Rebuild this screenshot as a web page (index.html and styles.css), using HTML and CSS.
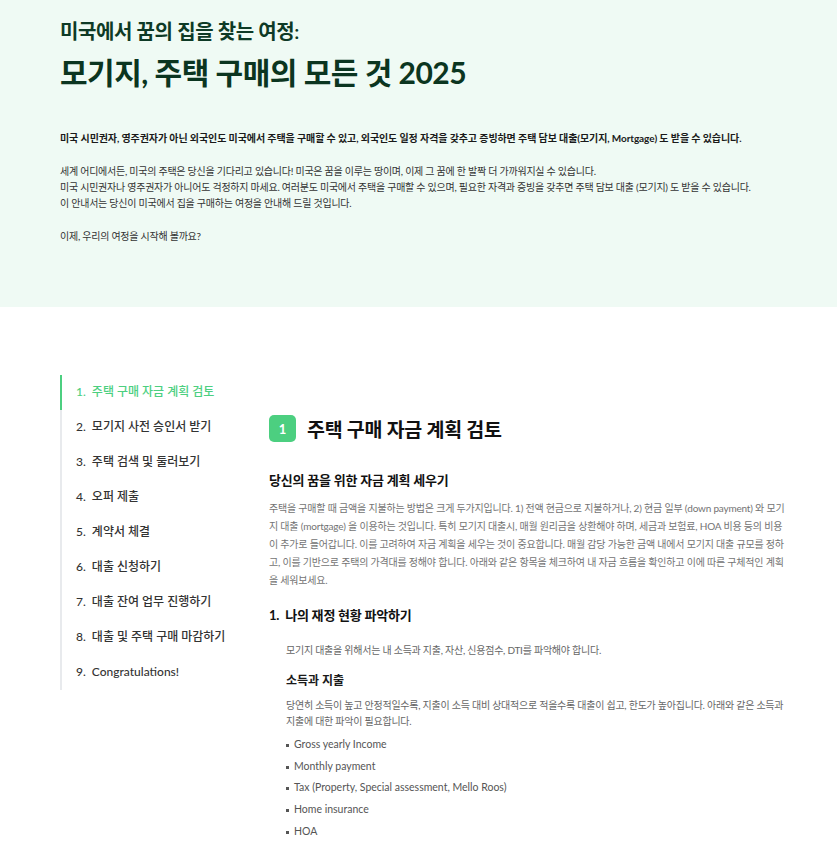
FILE: index.html
```html
<!DOCTYPE html>
<html lang="ko">
<head>
<meta charset="utf-8">
<title>모기지, 주택 구매의 모든 것 2025</title>
<link rel="stylesheet" href="styles.css">
</head>
<body>
<header class="hero">
  <h2 class="hero-sub">미국에서 꿈의 집을 찾는 여정:</h2>
  <h1 class="hero-title">모기지, 주택 구매의 모든 것 2025</h1>
  <p class="hero-lead">미국 시민권자, 영주권자가 아닌 외국인도 미국에서 주택을 구매할 수 있고, 외국인도 일정 자격을 갖추고 증빙하면 주택 담보 대출(모기지, Mortgage) 도 받을 수 있습니다.</p>
  <p class="hero-text">세계 어디에서든, 미국의 주택은 당신을 기다리고 있습니다! 미국은 꿈을 이루는 땅이며, 이제 그 꿈에 한 발짝 더 가까워지실 수 있습니다.<br>미국 시민권자나 영주권자가 아니어도 걱정하지 마세요. 여러분도 미국에서 주택을 구매할 수 있으며, 필요한 자격과 증빙을 갖추면 주택 담보 대출 (모기지) 도 받을 수 있습니다.<br>이 안내서는 당신이 미국에서 집을 구매하는 여정을 안내해 드릴 것입니다.</p>
  <p class="hero-text">이제, 우리의 여정을 시작해 볼까요?</p>
</header>

<div class="layout">
  <nav class="toc">
    <a class="toc-item active">1.&nbsp; 주택 구매 자금 계획 검토</a>
    <a class="toc-item">2.&nbsp; 모기지 사전 승인서 받기</a>
    <a class="toc-item">3.&nbsp; 주택 검색 및 둘러보기</a>
    <a class="toc-item">4.&nbsp; 오퍼 제출</a>
    <a class="toc-item">5.&nbsp; 계약서 체결</a>
    <a class="toc-item">6.&nbsp; 대출 신청하기</a>
    <a class="toc-item">7.&nbsp; 대출 잔여 업무 진행하기</a>
    <a class="toc-item">8.&nbsp; 대출 및 주택 구매 마감하기</a>
    <a class="toc-item">9.&nbsp; Congratulations!</a>
  </nav>

  <main class="content">
    <div class="step-head">
      <span class="step-badge">1</span>
      <h2 class="step-title">주택 구매 자금 계획 검토</h2>
    </div>

    <h3 class="sec-title">당신의 꿈을 위한 자금 계획 세우기</h3>
    <p class="sec-text">주택을 구매할 때 금액을 지불하는 방법은 크게 두가지입니다. 1) 전액 현금으로 지불하거나, 2) 현금 일부 (down payment) 와 모기지 대출 (mortgage) 을 이용하는 것입니다. 특히 모기지 대출시, 매월 원리금을 상환해야 하며, 세금과 보험료, HOA 비용 등의 비용이 추가로 들어갑니다. 이를 고려하여 자금 계획을 세우는 것이 중요합니다. 매월 감당 가능한 금액 내에서 모기지 대출 규모를 정하고, 이를 기반으로 주택의 가격대를 정해야 합니다. 아래와 같은 항목을 체크하여 내 자금 흐름을 확인하고 이에 따른 구체적인 계획을 세워보세요.</p>

    <h3 class="num-title">1.&nbsp; 나의 재정 현황 파악하기</h3>
    <div class="indent">
      <p class="small-text first">모기지 대출을 위해서는 내 소득과 지출, 자산, 신용점수, DTI를 파악해야 합니다.</p>
      <h4 class="sub-title">소득과 지출</h4>
      <p class="small-text after-sub">당연히 소득이 높고 안정적일수록, 지출이 소득 대비 상대적으로 적을수록 대출이 쉽고, 한도가 높아집니다. 아래와 같은 소득과 지출에 대한 파악이 필요합니다.</p>
      <ul class="bullets">
        <li>Gross yearly Income</li>
        <li>Monthly payment</li>
        <li>Tax (Property, Special assessment, Mello Roos)</li>
        <li>Home insurance</li>
        <li>HOA</li>
      </ul>
    </div>
  </main>
</div>
</body>
</html>
```

FILE: styles.css
```css
* { box-sizing: border-box; }

html, body {
  margin: 0;
  padding: 0;
  background: #ffffff;
}

body {
  font-family: "Lato", "Noto Sans CJK KR", "Noto Sans", sans-serif;
  color: #222;
}

.hero {
  background: #effaf4;
  height: 307px;
  padding: 18px 60px 0 60px;
}

.hero-sub {
  margin: 0;
  font-size: 20px;
  line-height: 26px;
  font-weight: 600;
  color: #0e3a26;
  letter-spacing: -0.4px;
}

.hero-title {
  margin: 9px 0 0 0;
  font-size: 30px;
  line-height: 38px;
  font-weight: 700;
  color: #0b3520;
  letter-spacing: -0.5px;
}

.hero-lead {
  margin: 39px 0 0 0;
  font-size: 10px;
  line-height: 16px;
  font-weight: 700;
  color: #1a1a1a;
  letter-spacing: -0.1px;
  white-space: nowrap;
}

.hero-text {
  margin: 17px 0 0 0;
  font-size: 10px;
  line-height: 16px;
  color: #333;
  letter-spacing: -0.25px;
}

.layout {
  display: grid;
  grid-template-columns: 209px 1fr;
  padding: 68px 48px 0 60px;
}

.toc {
  display: flex;
  flex-direction: column;
  border-left: 2px solid #e8eaed;
  align-self: start;
  height: 315px;
}

.toc-item {
  display: block;
  margin-left: -2px;
  border-left: 2px solid transparent;
  padding: 0 0 0 14px;
  height: 35px;
  line-height: 34px;
  font-size: 12px;
  font-weight: 500;
  color: #333;
  white-space: nowrap;
}

.toc-item.active {
  border-left-color: #4ccf80;
  color: #4ccf80;
}

.content {
  padding-top: 39px;
}

.step-head {
  display: flex;
  align-items: center;
  gap: 11px;
}

.step-badge {
  width: 27px;
  height: 27px;
  border-radius: 5px;
  background: #4ccf80;
  color: #fff;
  font-size: 13px;
  font-weight: 700;
  display: flex;
  align-items: center;
  justify-content: center;
}

.step-title {
  margin: 0;
  font-size: 19.5px;
  font-weight: 600;
  color: #111;
  letter-spacing: -0.3px;
}

.sec-title {
  margin: 27px 0 0 0;
  font-size: 13px;
  line-height: 20px;
  font-weight: 700;
  color: #111;
  letter-spacing: -0.2px;
}

.sec-text {
  margin: 9px 0 0 0;
  font-size: 10px;
  line-height: 18px;
  color: #737373;
  letter-spacing: -0.2px;
  word-break: break-all;
}

.num-title {
  margin: 16px 0 0 0;
  font-size: 13px;
  line-height: 20px;
  font-weight: 700;
  color: #111;
  letter-spacing: -0.2px;
}

.indent {
  padding-left: 17px;
}

.small-text {
  margin: 14px 0 0 0;
  font-size: 10px;
  line-height: 16px;
  color: #666;
  letter-spacing: -0.25px;
  word-break: break-all;
}

.small-text.first {
  margin-top: 17px;
}

.sub-title {
  margin: 14px 0 0 0;
  font-size: 12px;
  line-height: 18px;
  font-weight: 700;
  color: #1a1a1a;
}

.small-text.after-sub {
  margin-top: 7px;
}

.bullets {
  list-style: none;
  margin: 5px 0 0 0;
  padding: 0;
}

.bullets li {
  position: relative;
  padding-left: 8px;
  font-size: 10.5px;
  line-height: 21.7px;
  color: #555;
}

.bullets li::before {
  content: "";
  position: absolute;
  left: 0;
  top: 10px;
  width: 3px;
  height: 3px;
  background: #555;
}
```
